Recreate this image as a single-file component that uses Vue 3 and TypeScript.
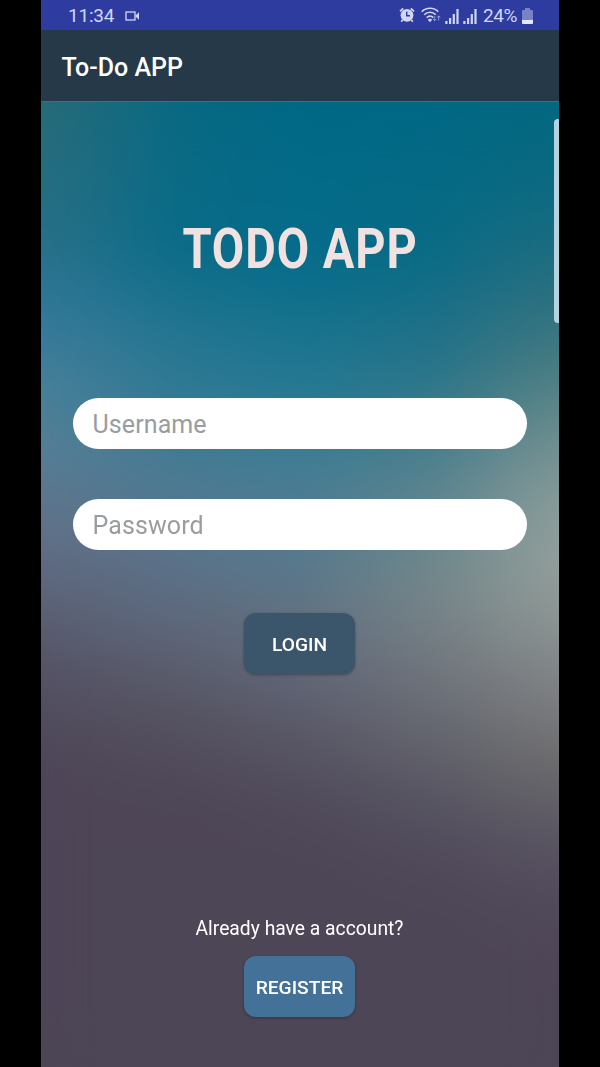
<script setup lang="ts">
import { ref } from 'vue'

const username = ref('')
const password = ref('')
const signal = [3, 6, 10, 15]
</script>

<template>
  <main class="stage">
    <div class="phone">
      <header class="status">
        <span class="clock">11:34</span>
        <svg class="cam" viewBox="0 0 15 10" width="15" height="10">
          <rect x="1" y="1" width="9" height="8" fill="none" stroke="currentColor" stroke-width="1.3" />
          <path d="M10.500 4.500 14 1.200v7.600l-3.500-3.300z" fill="currentColor" />
        </svg>
        <svg class="alarm" viewBox="0 0 16 16" width="16" height="16">
          <circle cx="8" cy="8.300" r="6.400" fill="currentColor" />
          <path d="M1 4.300 4.200 1.300M15 4.300 11.800 1.300M3.700 13 2.200 14.700M12.300 13l1.500 1.700" stroke="currentColor" stroke-width="1.800" fill="none" />
          <path d="M7.700 4.800v4h3.300" stroke="#2e3b9f" stroke-width="1.500" fill="none" />
        </svg>
        <svg class="wifi" viewBox="0 0 20 16" width="20" height="16">
          <g fill="none" stroke="currentColor" stroke-width="1.700">
            <path d="M.8 4.700C5 .1 13 .1 17.200 4.700" />
            <path d="M3.300 7.700c3-3.300 8.400-3.300 11.400 0" />
            <path d="M5.800 10.600c1.800-1.900 4.600-1.900 6.400 0" />
          </g>
          <path d="M6.800 12.700q2.200-1.700 4.400 0L9 15.200z" fill="currentColor" />
          <path d="M13.700 9v4.500M12.300 12l1.400 1.700 1.400-1.700M17.700 13.500V9M16.300 10.500l1.400-1.700 1.400 1.700" stroke="currentColor" fill="none" stroke-width=".9" opacity=".65" />
        </svg>
        <svg v-for="n in 2" :key="n" class="bars" viewBox="0 0 15 15" width="15" height="15">
          <rect v-for="(h, i) in signal" :key="i" :x="i * 3.7 + 0.3" :y="15 - h" width="2.2" :height="h" fill="currentColor" />
        </svg>
        <span class="percent">24%</span>
        <svg class="battery" viewBox="0 0 11 16" width="11" height="16">
          <path d="M3 0h5v2h2q1 0 1 1v12q0 1-1 1H1q-1 0-1-1V3q0-1 1-1h2z" fill="#7783c6" />
          <path d="M0 12h11v3q0 1-1 1H1q-1 0-1-1z" fill="#e4e8fc" />
        </svg>
      </header>
      <div class="appbar">To-Do APP</div>
      <section class="screen">
        <div class="wash c0"></div>
        <div class="wash c1"></div>
        <div class="wash c2"></div>
        <div class="wash c3"></div>
        <div class="wash c4"></div>
        <div class="wash blend"></div>
        <div class="edge"></div>
        <form class="content" @submit.prevent>
          <h1><span>TODO APP</span></h1>
          <input v-model="username" class="user" type="text" placeholder="Username" />
          <input v-model="password" class="pass" type="password" placeholder="Password" />
          <button class="login" type="submit">LOGIN</button>
          <p>Already have a account?</p>
          <button class="register" type="button">REGISTER</button>
        </form>
      </section>
    </div>
  </main>
</template>

<style>
body { margin: 0; background: #000; }
</style>

<style scoped>
* { box-sizing: border-box; }
.stage { width: 600px; height: 1067px; background: #000; font-family: Roboto, "Noto Sans", sans-serif; overflow: hidden; }
.phone { width: 518px; height: 1067px; margin-left: 41px; display: flex; flex-direction: column; }
.status { height: 30px; flex: none; background: #2e3b9f; color: #d0d7f6; display: flex; align-items: center; padding: 2px 26px 0 27px; font-size: 19px; line-height: 28px; }
.clock { width: 47px; letter-spacing: -0.2px; }
.cam { margin-left: 10px; margin-right: auto; }
.alarm { position: relative; top: -1px; }
.wifi { margin-left: 6px; margin-right: 4px; position: relative; top: -1px; }
.bars { margin-right: 3px; }
.percent { width: 36px; letter-spacing: -0.4px; margin-left: 2px; margin-right: 3px; }
.appbar { height: 72px; flex: none; background: #263948; color: #fff; border-bottom: 1px solid #357482; padding-left: 20.500px; font-size: 25px; font-weight: 500; line-height: 75px; }
.screen { flex: 1; position: relative; overflow: hidden; }
.wash { position: absolute; inset: 0; }
.c0 { background: linear-gradient(#286b78 0, #286f84 123px, #327899 210px, #457f99 270px, #567f96 345px, #627087 432px, #5c6277 500px, #555366 565px, #4e4656 665px, #4d4656 100%); }
.c1 { background: linear-gradient(#0a6982 0, #0b6c88 149px, #247590 229px, #337a95 299px, #4a7b93 370px, #5b738a 455px, #5e677a 524px, #5a5d6d 565px, #534e5d 635px, #4e4656 700px, #4d4656 100%); mask-image: linear-gradient(90deg, transparent 0, #000 130px); }
.c2 { background: linear-gradient(#006885 0, #056c8a 155px, #19748e 235px, #297a95 299px, #457d94 370px, #58798e 459px, #62717f 520px, #61687a 565px, #5a5967 627px, #504a5b 700px, #4d4656 755px, #4d4656 100%); mask-image: linear-gradient(90deg, transparent 130px, #000 260px); }
.c3 { background: linear-gradient(#006885 0, #096b85 149px, #1e7088 229px, #32788b 299px, #53818e 370px, #6a888c 440px, #768489 500px, #70767d 565px, #656770 627px, #5a5864 685px, #504a5b 750px, #4d4656 810px, #4d4656 100%); mask-image: linear-gradient(90deg, transparent 260px, #000 390px); }
.c4 { background: linear-gradient(#04677f 0, #0f6a80 99px, #2c6f80 190px, #487b80 260px, #718e8e 335px, #8d9d9b 410px, #949f9c 465px, #8c9492 524px, #7e8083 590px, #6e6e6f 655px, #5f5c65 715px, #544d5e 775px, #4e4657 863px, #4d4656 100%); mask-image: linear-gradient(90deg, transparent 390px, #000 518px); }
.blend { backdrop-filter: blur(22px); }
.edge { position: absolute; right: 0; top: 17px; width: 5px; height: 204px; border-radius: 4px 0 0 4px; background: #b5d3dd; }
.content { position: relative; display: flex; flex-direction: column; align-items: center; padding: 112px 32px 0 31px; }
h1 { margin: 0; height: 70px; color: #f0e2e1; font-size: 56px; font-weight: 700; line-height: 71px; white-space: nowrap; }
h1 span { display: inline-block; transform: scaleX(0.84); letter-spacing: 1.1px; margin-left: 1px; margin-right: -1px; }
input { width: 454px; height: 51px; border: 0; border-radius: 26px; background: #fff; padding: 1px 20px 0 20px; font: 400 25px Roboto, sans-serif; letter-spacing: 0.1px; color: #444; outline: 0; }
input::placeholder { color: #999da0; opacity: 1; }
.user { margin-top: 114px; }
.pass { margin-top: 50px; }
button { width: 111px; height: 61px; border: 0; border-radius: 12px; color: #fff; font: 500 19.2px Roboto, sans-serif; padding: 1px 0 0; box-shadow: 0 1px 3px rgba(20, 20, 35, 0.4); white-space: nowrap; }
.login { background: #3b566b; margin-top: 63px; }
p { margin: 242px 0 0; height: 26px; line-height: 26px; font-size: 19.3px; color: #fff; }
.register { background: #447198; margin-top: 14px; }
</style>
